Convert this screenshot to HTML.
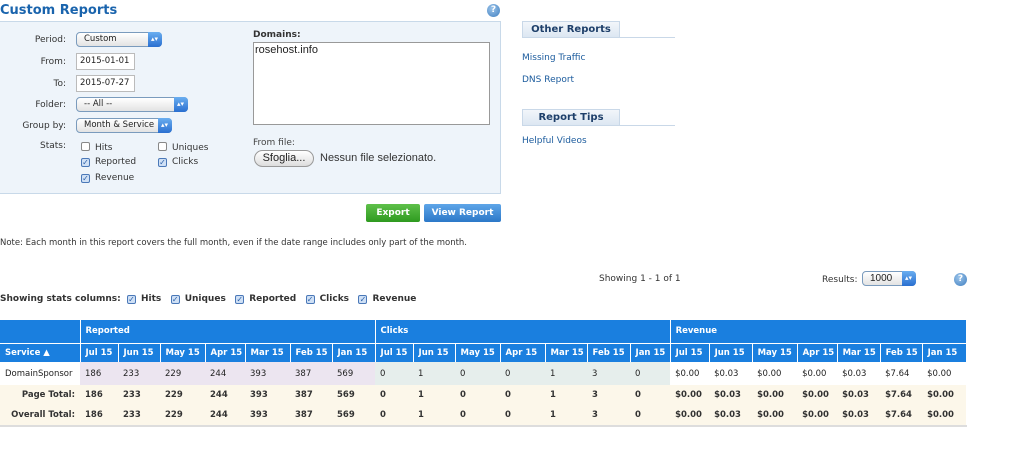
<!DOCTYPE html>
<html><head><meta charset="utf-8"><style>
*{box-sizing:border-box;margin:0;padding:0}
body{width:1024px;height:449px;background:#fff;font-family:"DejaVu Sans","Liberation Sans",sans-serif;font-size:9px;color:#222;position:relative;overflow:hidden}
.a{position:absolute;white-space:nowrap}
.help{position:absolute;width:13px;height:13px;border-radius:50%;background:radial-gradient(circle at 40% 35%,#9cc4ea,#3f7fc0);color:#fff;font-size:9px;font-weight:bold;text-align:center;line-height:13px}
.lbl{position:absolute;width:66px;text-align:right;font-size:9px;color:#333}
.sel{position:absolute;height:15px;border:1px solid #7a9bbd;border-radius:4px;background:linear-gradient(#fff,#e3e3e3);font-size:8.5px;padding-left:7px;line-height:13px;color:#222}
.sel:after{content:"";position:absolute;right:-1px;top:-1px;width:14px;height:15px;border-radius:0 4px 4px 0;background:linear-gradient(#6aaef0,#2a6fd0)}
.sel i{position:absolute;right:3px;top:0;color:#fff;font-style:normal;z-index:2;font-size:7px;line-height:13px}
.inp{position:absolute;height:17px;border:1px solid #bbb;background:#fff;font-size:8.5px;padding-left:3px;line-height:15px}
.cb{position:absolute;font-size:9px;color:#333}
.cb b{display:inline-block;width:9px;height:9px;border:1px solid #888;border-radius:2px;background:#fff;vertical-align:-1px;margin-right:5px;font-size:8px;line-height:8px;color:#2a5fa8;text-align:center;font-weight:bold}
.cb b.on{background:#cfe0f5;border-color:#4a78b8}
table{position:absolute;left:0;top:320px;width:966px;border-collapse:collapse;table-layout:fixed;font-size:8.5px}
td,th{padding:0 0 0 5px;text-align:left;white-space:nowrap;overflow:hidden}
th{background:#1a7fdf;color:#fff;font-weight:bold}
tr.h1 th{height:23px;border-left:1px solid #fff}
tr.h2 th{height:19px;border-left:1px solid #fff;border-top:1px solid #fff}
tr.d td{height:23px}
tr.t td{height:20px;font-weight:bold;background:#fcf7ea;color:#333}
.rp{background:#ece5f0}.ck{background:#e6eeec}
.tab{position:absolute;left:522px;width:98px;height:17px;background:linear-gradient(#f2f6fa,#dce7f2);border:1px solid #c9d8e8;font-weight:bold;font-size:10px;color:#1e3f6a;text-align:center;line-height:15px}
.tl{position:absolute;left:522px;width:153px;height:1px;background:#c9d8e8}
.lnk{position:absolute;left:522px;color:#1b5b9d;font-size:9px}
.btn{position:absolute;top:204px;height:18px;border-radius:2px;color:#fff;font-weight:bold;font-size:9px;text-align:center;line-height:18px}
</style></head><body>
<div class="a" style="left:0;top:3px;font-size:13px;font-weight:bold;color:#1a64ad">Custom Reports</div>
<div class="help" style="left:487px;top:4px">?</div>
<div class="a" style="left:0;top:21px;width:501px;height:173px;background:#eef4fa;border:1px solid #c8d9e9;border-left:none"></div>
<div class="lbl" style="top:35px">Period:</div>
<div class="sel" style="left:76px;top:32px;width:86px">Custom<i>▴▾</i></div>
<div class="lbl" style="top:57px">From:</div>
<div class="inp" style="left:76px;top:53px;width:59px">2015-01-01</div>
<div class="lbl" style="top:79px">To:</div>
<div class="inp" style="left:76px;top:75px;width:59px">2015-07-27</div>
<div class="lbl" style="top:100px">Folder:</div>
<div class="sel" style="left:76px;top:97px;width:112px">-- All --<i>▴▾</i></div>
<div class="lbl" style="top:121px">Group by:</div>
<div class="sel" style="left:76px;top:118px;width:96px">Month &amp; Service<i>▴▾</i></div>
<div class="lbl" style="top:141px">Stats:</div>
<div class="cb" style="left:81px;top:142px"><b></b>Hits</div>
<div class="cb" style="left:158px;top:142px"><b></b>Uniques</div>
<div class="cb" style="left:81px;top:157px"><b class="on">✓</b>Reported</div>
<div class="cb" style="left:158px;top:157px"><b class="on">✓</b>Clicks</div>
<div class="cb" style="left:81px;top:173px"><b class="on">✓</b>Revenue</div>
<div class="a" style="left:253px;top:30px;font-weight:bold;color:#333">Domains:</div>
<div class="a" style="left:253px;top:42px;width:237px;height:83px;background:#fff;border:1px solid #999;font-family:'Liberation Sans',sans-serif;font-size:11px;padding:1px 1px">rosehost.info</div>
<div class="a" style="left:253px;top:138px;color:#444">From file:</div>
<div class="a" style="left:254px;top:150px;width:60px;height:17px;border:1px solid #999;border-radius:9px;background:linear-gradient(#fff,#ddd);font-family:'Liberation Sans',sans-serif;font-size:11px;text-align:center;line-height:15px">Sfoglia...</div>
<div class="a" style="left:320px;top:152px;font-family:'Liberation Sans',sans-serif;font-size:11px;color:#333">Nessun file selezionato.</div>
<div class="btn" style="left:366px;width:54px;background:linear-gradient(#5ec04a,#2e9a1f)">Export</div>
<div class="btn" style="left:424px;width:77px;background:linear-gradient(#5ea5e8,#2c78c8)">View Report</div>
<div class="tab" style="top:21px">Other Reports</div><div class="tl" style="top:37px"></div>
<div class="lnk" style="top:53px">Missing Traffic</div>
<div class="lnk" style="top:75px">DNS Report</div>
<div class="tab" style="top:109px">Report Tips</div><div class="tl" style="top:125px"></div>
<div class="lnk" style="top:136px">Helpful Videos</div>
<div class="a" style="left:0;top:238px;font-size:8.5px;color:#333">Note: Each month in this report covers the full month, even if the date range includes only part of the month.</div>
<div class="a" style="left:599px;top:274px;color:#333">Showing 1 - 1 of 1</div>
<div class="a" style="left:822px;top:275px;color:#333">Results:</div>
<div class="sel" style="left:862px;top:271px;width:54px;font-size:10px;font-family:'Liberation Sans',sans-serif">1000<i>▴▾</i></div>
<div class="help" style="left:954px;top:273px">?</div>
<div class="a" style="left:0;top:294px;font-weight:bold;color:#333">Showing stats columns: &nbsp;<span class="cb" style="position:static;font-weight:bold"><b class="on">✓</b>Hits</span> &nbsp; <span class="cb" style="position:static;font-weight:bold"><b class="on">✓</b>Uniques</span> &nbsp; <span class="cb" style="position:static;font-weight:bold"><b class="on">✓</b>Reported</span> &nbsp; <span class="cb" style="position:static;font-weight:bold"><b class="on">✓</b>Clicks</span> &nbsp; <span class="cb" style="position:static;font-weight:bold"><b class="on">✓</b>Revenue</span></div>
<table>
<colgroup><col style="width:80px"><col style="width:38px"><col style="width:42px"><col style="width:45px"><col style="width:40px"><col style="width:45px"><col style="width:42px"><col style="width:43px"><col style="width:38px"><col style="width:42px"><col style="width:45px"><col style="width:45px"><col style="width:42px"><col style="width:43px"><col style="width:40px"><col style="width:39px"><col style="width:43px"><col style="width:45px"><col style="width:40px"><col style="width:43px"><col style="width:42px"><col style="width:44px"></colgroup>
<tr class="h1"><th style="border-left:none"></th><th colspan="7">Reported</th><th colspan="7">Clicks</th><th colspan="7">Revenue</th></tr>
<tr class="h2"><th style="border-left:none">Service ▲</th><th>Jul 15</th><th>Jun 15</th><th>May 15</th><th>Apr 15</th><th>Mar 15</th><th>Feb 15</th><th>Jan 15</th><th>Jul 15</th><th>Jun 15</th><th>May 15</th><th>Apr 15</th><th>Mar 15</th><th>Feb 15</th><th>Jan 15</th><th>Jul 15</th><th>Jun 15</th><th>May 15</th><th>Apr 15</th><th>Mar 15</th><th>Feb 15</th><th>Jan 15</th></tr>
<tr class="d"><td>DomainSponsor</td><td class="rp">186</td><td class="rp">233</td><td class="rp">229</td><td class="rp">244</td><td class="rp">393</td><td class="rp">387</td><td class="rp">569</td><td class="ck">0</td><td class="ck">1</td><td class="ck">0</td><td class="ck">0</td><td class="ck">1</td><td class="ck">3</td><td class="ck">0</td><td>$0.00</td><td>$0.03</td><td>$0.00</td><td>$0.00</td><td>$0.03</td><td>$7.64</td><td>$0.00</td></tr>
<tr class="t"><td style="text-align:right;padding-right:5px">Page Total:</td><td>186</td><td>233</td><td>229</td><td>244</td><td>393</td><td>387</td><td>569</td><td>0</td><td>1</td><td>0</td><td>0</td><td>1</td><td>3</td><td>0</td><td>$0.00</td><td>$0.03</td><td>$0.00</td><td>$0.00</td><td>$0.03</td><td>$7.64</td><td>$0.00</td></tr>
<tr class="t"><td style="text-align:right;padding-right:5px">Overall Total:</td><td>186</td><td>233</td><td>229</td><td>244</td><td>393</td><td>387</td><td>569</td><td>0</td><td>1</td><td>0</td><td>0</td><td>1</td><td>3</td><td>0</td><td>$0.00</td><td>$0.03</td><td>$0.00</td><td>$0.00</td><td>$0.03</td><td>$7.64</td><td>$0.00</td></tr>
</table>
<div class="a" style="left:0;top:425px;width:967px;height:2px;background:#ddd"></div>
</body></html>
